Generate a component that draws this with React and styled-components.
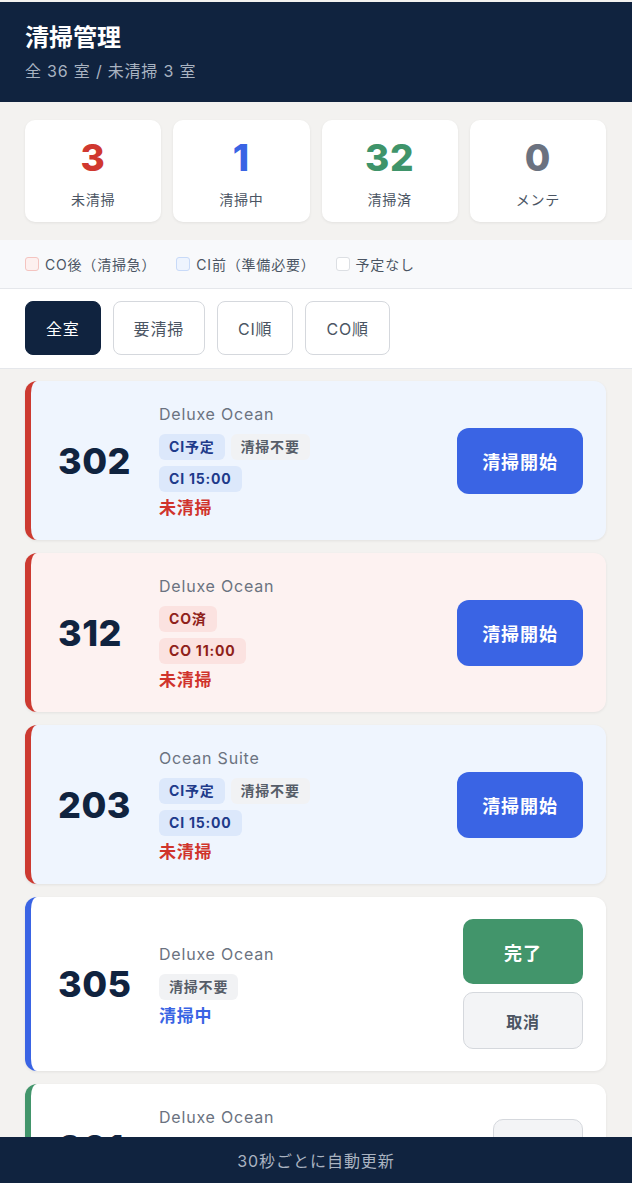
import React from 'react'
import styled, { createGlobalStyle } from 'styled-components'

const GlobalStyle = createGlobalStyle`
    body {
        margin: 0;
        background: #f3f2f0;
        font-family: Inter, "Noto Sans CJK JP", sans-serif;
        letter-spacing: 0.05em;
        color: #1f2937;
    }
`

const stats = [
    { value: 3, label: '未清掃', color: '#d0382f' },
    { value: 1, label: '清掃中', color: '#3a64e4' },
    { value: 32, label: '清掃済', color: '#3f946a' },
    { value: 0, label: 'メンテ', color: '#6b7280' },
]

const legend = [
    { label: 'CO後（清掃急）', fill: '#fdf0ef', border: '#f4c4c0' },
    { label: 'CI前（準備必要）', fill: '#eef4fe', border: '#c8daf8' },
    { label: '予定なし', fill: '#ffffff', border: '#dcdfe3' },
]

const filters = ['全室', '要清掃', 'CI順', 'CO順']

const rooms = [
    {
        no: '302', type: 'Deluxe Ocean', tone: 'ci', edge: 'red',
        tags: [['blue', 'CI予定'], ['gray', '清掃不要']], time: ['blue', 'CI 15:00'],
        status: '未清掃', statusColor: 'red', action: 'start',
    },
    {
        no: '312', type: 'Deluxe Ocean', tone: 'co', edge: 'red',
        tags: [['red', 'CO済']], time: ['red', 'CO 11:00'],
        status: '未清掃', statusColor: 'red', action: 'start',
    },
    {
        no: '203', type: 'Ocean Suite', tone: 'ci', edge: 'red',
        tags: [['blue', 'CI予定'], ['gray', '清掃不要']], time: ['blue', 'CI 15:00'],
        status: '未清掃', statusColor: 'red', action: 'start',
    },
    {
        no: '305', type: 'Deluxe Ocean', tone: 'none', edge: 'blue',
        tags: [['gray', '清掃不要']], time: null,
        status: '清掃中', statusColor: 'blue', action: 'progress',
    },
    {
        no: '301', type: 'Deluxe Ocean', tone: 'none', edge: 'green',
        tags: [['gray', '清掃不要']], time: null,
        status: '清掃済', statusColor: 'green', action: 'done',
    },
]

const CleaningBoard = () => {
    return (
        <Page>
            <GlobalStyle />
            <Header>
                <Title>清掃管理</Title>
                <Sub>全 36 室 / 未清掃 3 室</Sub>
            </Header>

            <StatsGrid>
                {stats.map(s => (
                    <StatCard key={s.label}>
                        <StatValue color={s.color}>{s.value}</StatValue>
                        <StatLabel>{s.label}</StatLabel>
                    </StatCard>
                ))}
            </StatsGrid>

            <Legend>
                {legend.map(l => (
                    <LegendItem key={l.label}>
                        <Swatch fill={l.fill} border={l.border} />
                        {l.label}
                    </LegendItem>
                ))}
            </Legend>

            <FilterBar>
                {filters.map((f, i) => (
                    <FilterButton key={f} active={i === 0}>{f}</FilterButton>
                ))}
            </FilterBar>

            <List>
                {rooms.map(r => (
                    <Card key={r.no} tone={r.tone} edge={r.edge}>
                        <RoomNo>{r.no}</RoomNo>
                        <Info>
                            <RoomType>{r.type}</RoomType>
                            <TagRow>
                                {r.tags.map(([kind, text]) => (
                                    <Tag key={text} kind={kind}>{text}</Tag>
                                ))}
                            </TagRow>
                            {r.time && (
                                <TagRow>
                                    <Tag kind={r.time[0]}>{r.time[1]}</Tag>
                                </TagRow>
                            )}
                            <Status color={r.statusColor}>{r.status}</Status>
                        </Info>
                        <Actions>
                            {r.action === 'start' && <StartButton>清掃開始</StartButton>}
                            {r.action === 'progress' && (
                                <>
                                    <DoneButton>完了</DoneButton>
                                    <GhostButton>取消</GhostButton>
                                </>
                            )}
                            {r.action === 'done' && <GhostButton small>戻す</GhostButton>}
                        </Actions>
                    </Card>
                ))}
            </List>

            <Footer>30秒ごとに自動更新</Footer>
        </Page>
    )
}

const edgeColors = {
    red: '#cc3a31',
    blue: '#3a64e4',
    green: '#42956b',
}

const toneColors = {
    ci: '#eff5fe',
    co: '#fdf2f1',
    none: '#ffffff',
}

const statusColors = {
    red: '#d0342c',
    blue: '#3a64e4',
    green: '#3f946a',
}

const tagStyles = {
    blue: { bg: '#dce8fb', fg: '#1e3a8a' },
    gray: { bg: '#f1f2f4', fg: '#565d68' },
    red: { bg: '#fbe2e0', fg: '#8f1f1a' },
}

const Page = styled.div`
    padding-top: 2px;
    min-height: 100vh;
`

const Header = styled.header`
    background: #10233f;
    padding: 21px 25px 20px;
`

const Title = styled.h1`
    margin: 0;
    font-size: 24px;
    line-height: 30px;
    font-weight: 700;
    letter-spacing: 0;
    color: #fff;
`

const Sub = styled.div`
    margin-top: 7px;
    font-size: 16px;
    line-height: 22px;
    color: #a9b3c1;
`

const StatsGrid = styled.div`
    display: grid;
    grid-template-columns: repeat(4, 1fr);
    gap: 12px;
    padding: 18px 26px 18px 25px;
`

const StatCard = styled.div`
    background: #fff;
    border-radius: 10px;
    height: 102px;
    box-sizing: border-box;
    padding-top: 16px;
    box-shadow: 0 1px 3px rgba(0,0,0,0.07);
    display: flex;
    flex-direction: column;
    align-items: center;
`

const StatValue = styled.div`
    font-size: 37px;
    line-height: 44px;
    font-weight: 800;
    color: ${p => p.color};
`

const StatLabel = styled.div`
    margin-top: 11px;
    font-size: 14px;
    line-height: 18px;
    color: #4b5563;
`

const Legend = styled.div`
    display: flex;
    align-items: center;
    gap: 20px;
    height: 48px;
    padding: 0 25px;
    background: #f8f9fb;
    border-bottom: 1px solid #e5e7eb;
`

const LegendItem = styled.div`
    display: flex;
    align-items: center;
    gap: 6px;
    font-size: 14px;
    color: #4b5563;
`

const Swatch = styled.span`
    width: 12px;
    height: 12px;
    border-radius: 3px;
    background: ${p => p.fill};
    border: 1.5px solid ${p => p.border};
`

const FilterBar = styled.div`
    display: flex;
    gap: 12px;
    padding: 12px 25px 13px;
    background: #fff;
    border-bottom: 1px solid #e5e7eb;
`

const FilterButton = styled.button`
    height: 54px;
    padding: 0 20px;
    border-radius: 8px;
    font-family: inherit;
    font-size: 16px;
    letter-spacing: 0.05em;
    border: 1.5px solid ${p => (p.active ? '#10233f' : '#d5d8dd')};
    background: ${p => (p.active ? '#10233f' : '#fff')};
    color: ${p => (p.active ? '#fff' : '#4b5563')};
`

const List = styled.div`
    display: flex;
    flex-direction: column;
    gap: 13px;
    padding: 12px 26px 80px 25px;
`

const Card = styled.div`
    display: flex;
    align-items: center;
    background: ${p => toneColors[p.tone]};
    border-left: 6px solid ${p => edgeColors[p.edge]};
    border-radius: 12px;
    padding: 22px 23px 22px 27px;
    box-shadow: 0 1px 3px rgba(0,0,0,0.07);
`

const RoomNo = styled.div`
    width: 101px;
    flex-shrink: 0;
    font-size: 36px;
    font-weight: 800;
    color: #10233f;
    letter-spacing: 0.5px;
`

const Info = styled.div`
    flex: 1;
    display: flex;
    flex-direction: column;
    align-items: flex-start;
`

const RoomType = styled.div`
    font-size: 16px;
    line-height: 22px;
    color: #6b7280;
    margin-bottom: 9px;
`

const TagRow = styled.div`
    display: flex;
    gap: 6px;
    margin-bottom: 6px;
`

const Tag = styled.span`
    font-size: 14px;
    font-weight: 700;
    line-height: 18px;
    padding: 4px 10px;
    border-radius: 6px;
    background: ${p => tagStyles[p.kind].bg};
    color: ${p => tagStyles[p.kind].fg};
`

const Status = styled.div`
    font-size: 17px;
    line-height: 20px;
    font-weight: 700;
    color: ${p => statusColors[p.color]};
`

const Actions = styled.div`
    display: flex;
    flex-direction: column;
    align-items: flex-end;
    gap: 8px;
`

const StartButton = styled.button`
    width: 126px;
    height: 66px;
    border: none;
    border-radius: 12px;
    background: #3a64e4;
    color: #fff;
    font-family: inherit;
    font-size: 18px;
    font-weight: 700;
    letter-spacing: 0.05em;
`

const DoneButton = styled.button`
    width: 120px;
    height: 65px;
    border: none;
    border-radius: 10px;
    background: #42956b;
    color: #fff;
    font-family: inherit;
    font-size: 18px;
    font-weight: 700;
    letter-spacing: 0.05em;
`

const GhostButton = styled.button`
    width: ${p => (p.small ? '90px' : '120px')};
    height: 57px;
    border: 1.5px solid #d5d8dd;
    border-radius: 10px;
    background: #f3f4f6;
    color: #4b5563;
    font-family: inherit;
    font-size: 16px;
    font-weight: 700;
    letter-spacing: 0.05em;
`

const Footer = styled.footer`
    position: fixed;
    left: 0;
    right: 0;
    bottom: 0;
    height: 46px;
    display: flex;
    align-items: center;
    justify-content: center;
    background: #10233f;
    color: #aab3c1;
    font-size: 16px;
    letter-spacing: 0.06em;
`

export default CleaningBoard
